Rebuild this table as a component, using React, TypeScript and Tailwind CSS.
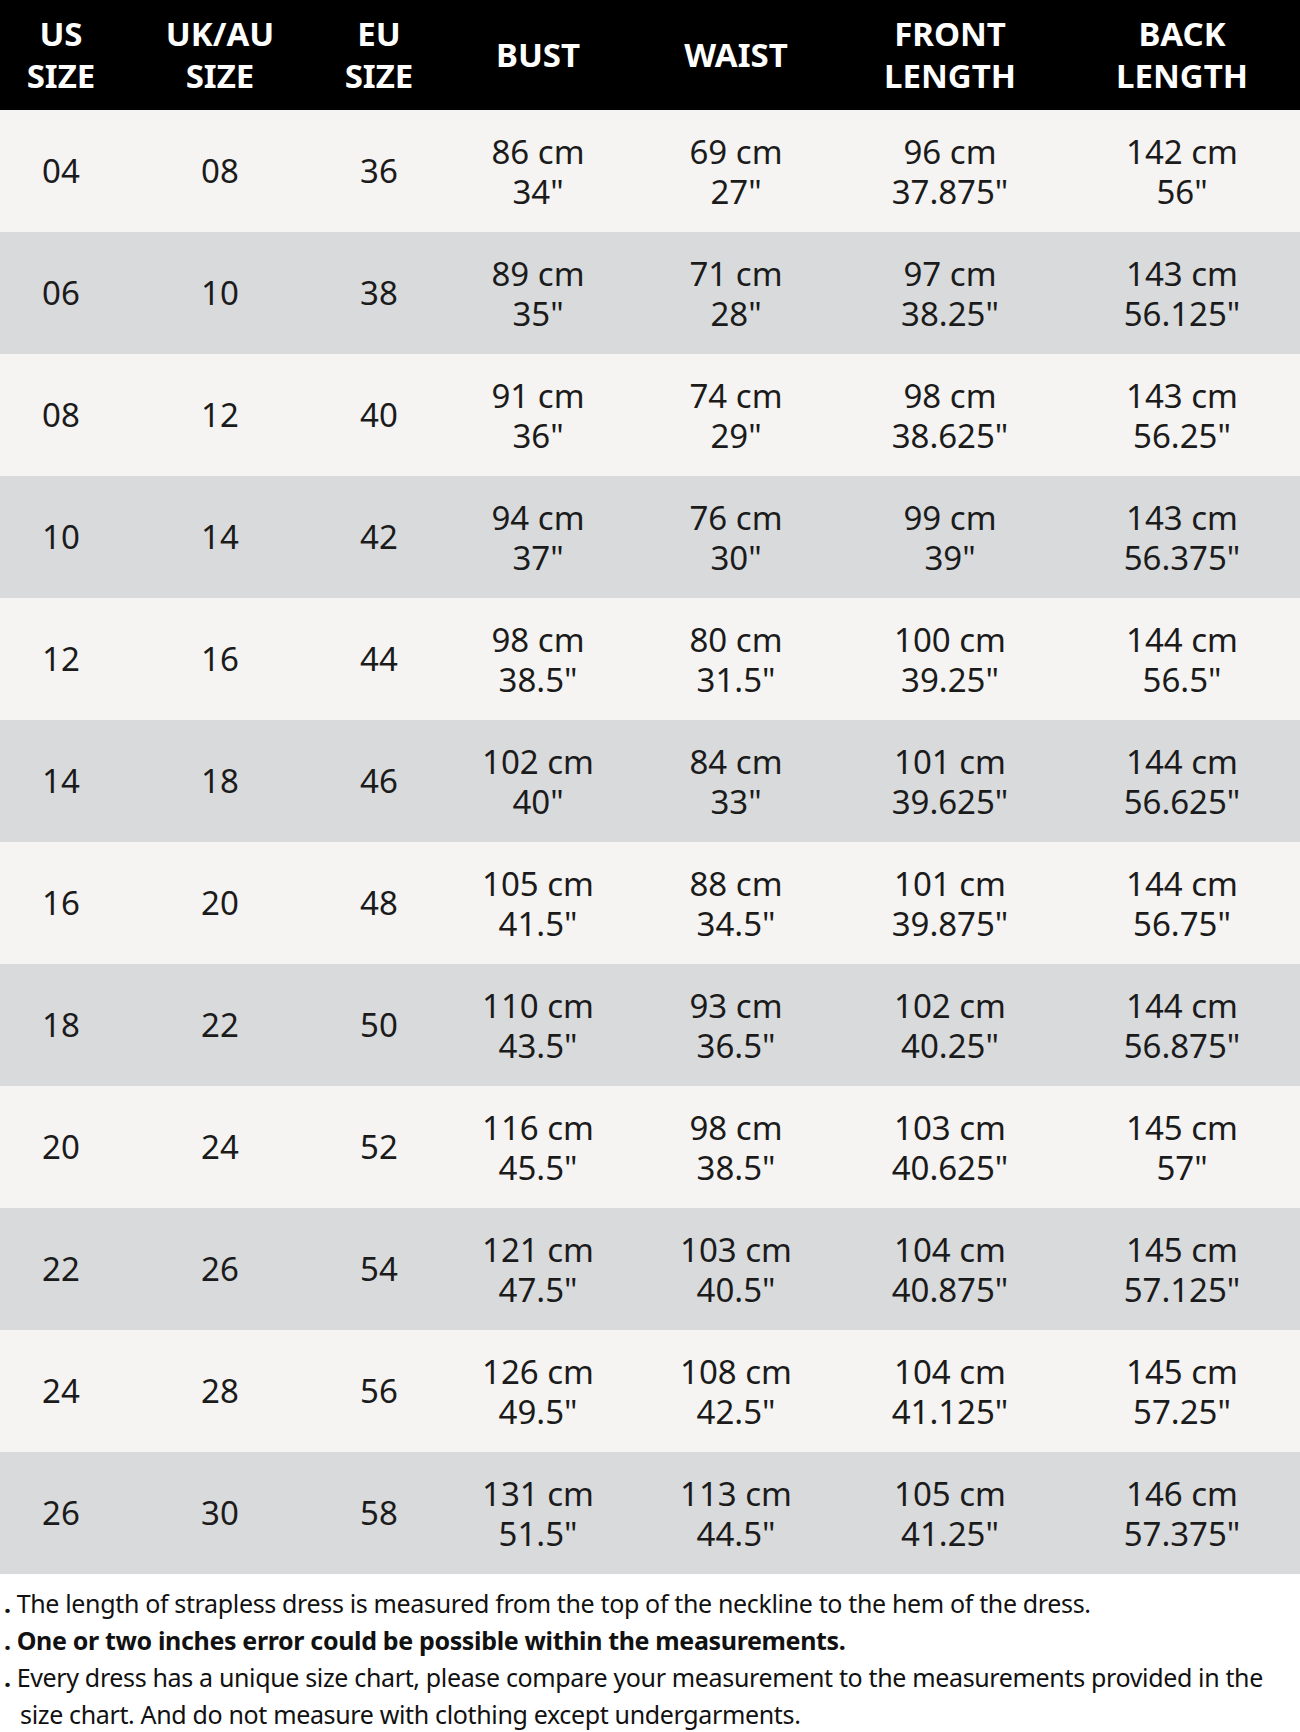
import React from "react";

const rows: [string, string, string, string, string, string, string, string, string, string, string][] = [
  ["04", "08", "36", "86 cm", '34"', "69 cm", '27"', "96 cm", '37.875"', "142 cm", '56"'],
  ["06", "10", "38", "89 cm", '35"', "71 cm", '28"', "97 cm", '38.25"', "143 cm", '56.125"'],
  ["08", "12", "40", "91 cm", '36"', "74 cm", '29"', "98 cm", '38.625"', "143 cm", '56.25"'],
  ["10", "14", "42", "94 cm", '37"', "76 cm", '30"', "99 cm", '39"', "143 cm", '56.375"'],
  ["12", "16", "44", "98 cm", '38.5"', "80 cm", '31.5"', "100 cm", '39.25"', "144 cm", '56.5"'],
  ["14", "18", "46", "102 cm", '40"', "84 cm", '33"', "101 cm", '39.625"', "144 cm", '56.625"'],
  ["16", "20", "48", "105 cm", '41.5"', "88 cm", '34.5"', "101 cm", '39.875"', "144 cm", '56.75"'],
  ["18", "22", "50", "110 cm", '43.5"', "93 cm", '36.5"', "102 cm", '40.25"', "144 cm", '56.875"'],
  ["20", "24", "52", "116 cm", '45.5"', "98 cm", '38.5"', "103 cm", '40.625"', "145 cm", '57"'],
  ["22", "26", "54", "121 cm", '47.5"', "103 cm", '40.5"', "104 cm", '40.875"', "145 cm", '57.125"'],
  ["24", "28", "56", "126 cm", '49.5"', "108 cm", '42.5"', "104 cm", '41.125"', "145 cm", '57.25"'],
  ["26", "30", "58", "131 cm", '51.5"', "113 cm", '44.5"', "105 cm", '41.25"', "146 cm", '57.375"'],
];

const grid = "grid grid-cols-[122px_196px_122px_196px_200px_228px_236px]";
const font = { fontFamily: '"Noto Sans", "Open Sans", sans-serif' };

function Pair({ a, b }: { a: string; b: string }) {
  return (
    <div className="flex flex-col items-center justify-center leading-[40px] pt-[2px]">
      <span>{a}</span>
      <span>{b}</span>
    </div>
  );
}

export default function App() {
  return (
    <div className="w-[1300px] h-[1732px] bg-white text-[#1b1b1b]" style={font}>
      <div className={`${grid} h-[110px] bg-black text-white font-bold text-[33px] leading-[42px] text-center items-center`}>
        <div className="flex flex-col"><span>US</span><span>SIZE</span></div>
        <div className="flex flex-col"><span>UK/AU</span><span>SIZE</span></div>
        <div className="flex flex-col"><span>EU</span><span>SIZE</span></div>
        <div>BUST</div>
        <div>WAIST</div>
        <div className="flex flex-col"><span>FRONT</span><span>LENGTH</span></div>
        <div className="flex flex-col"><span>BACK</span><span>LENGTH</span></div>
      </div>
      {rows.map((r, i) => (
        <div
          key={r[0]}
          className={`${grid} h-[122px] items-center text-center text-[33px] ${i % 2 === 0 ? "bg-[#f5f4f2]" : "bg-[#d9dadb]"}`}
        >
          <div>{r[0]}</div>
          <div>{r[1]}</div>
          <div>{r[2]}</div>
          <Pair a={r[3]} b={r[4]} />
          <Pair a={r[5]} b={r[6]} />
          <Pair a={r[7]} b={r[8]} />
          <Pair a={r[9]} b={r[10]} />
        </div>
      ))}
      <div className="flex flex-col pt-[11px] pl-[4px] text-[25px] leading-[37px] tracking-[-0.35px] text-[#111] whitespace-nowrap">
        <p><span className="font-bold mr-[6px]">.</span>The length of strapless dress is measured from the top of the neckline to the hem of the dress.</p>
        <p className="font-bold"><span className="mr-[6px]">.</span>One or two inches error could be possible within the measurements.</p>
        <p><span className="font-bold mr-[6px]">.</span>Every dress has a unique size chart, please compare your measurement to the measurements provided in the</p>
        <p className="pl-[16px]">size chart. And do not measure with clothing except undergarments.</p>
      </div>
    </div>
  );
}
